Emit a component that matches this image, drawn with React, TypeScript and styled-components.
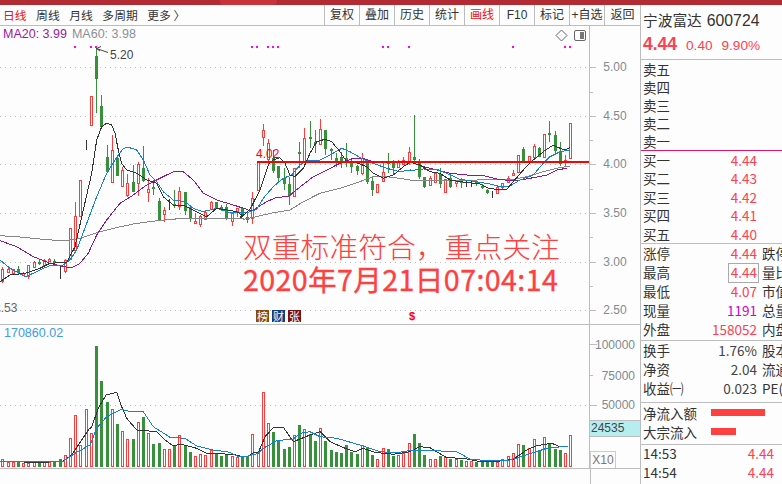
import styled, { createGlobalStyle } from "styled-components";

const SANS = `"Liberation Sans", "Noto Sans CJK SC", sans-serif`;
const CJK = `"Noto Sans CJK SC", "Liberation Sans", sans-serif`;

const UP = "#ff3c3c";
const DOWN = "#37913a";
const BG = "#fdfdfd";
const LINE = "#bdbdbd";

type Candle = [string, number, number, number, number];

// colour, wick top, body top, body bottom, wick bottom (page pixels)
const candles: Candle[] = [
  ["r", 267, 269, 281, 283], ["r", 268, 269, 272, 273], ["r", 269, 269, 273, 273], ["g", 266, 269, 273, 275],
  ["r", 272, 273, 275, 275], ["r", 265, 265, 276, 279], ["r", 261, 262, 267, 268], ["g", 260, 262, 263, 265],
  ["r", 259, 260, 265, 266], ["r", 258, 259, 261, 262], ["g", 259, 261, 262, 265], ["k", 265, 267, 267, 279],
  ["r", 259, 260, 271, 273], ["r", 228, 228, 259, 260], ["r", 202, 216, 250, 250], ["r", 180, 180, 216, 216],
  ["k", 140, 145, 145, 150], ["r", 96, 96, 125, 125], ["g", 47, 56, 79, 113], ["g", 95, 106, 127, 127],
  ["g", 145, 157, 172, 172], ["r", 135, 150, 182, 182], ["g", 155, 158, 176, 176], ["r", 167, 170, 186, 186],
  ["r", 174, 183, 195, 197], ["g", 165, 182, 192, 192], ["r", 162, 164, 183, 196], ["g", 146, 168, 181, 182],
  ["r", 178, 189, 192, 202], ["g", 180, 187, 189, 195], ["g", 198, 201, 220, 221], ["r", 207, 210, 214, 222],
  ["k", 199, 204, 204, 210], ["g", 190, 204, 206, 208], ["r", 187, 191, 206, 210], ["g", 192, 192, 211, 215],
  ["g", 207, 207, 219, 222], ["r", 213, 221, 223, 223], ["r", 215, 216, 224, 227], ["r", 210, 212, 219, 219],
  ["r", 201, 202, 209, 210], ["g", 202, 202, 208, 208], ["g", 205, 207, 210, 211], ["g", 204, 207, 219, 220],
  ["r", 212, 213, 221, 226], ["r", 208, 208, 211, 217], ["g", 207, 208, 215, 217], ["g", 213, 217, 220, 223],
  ["r", 192, 198, 218, 224], ["r", 161, 162, 190, 190], ["r", 124, 130, 137, 146], ["r", 139, 143, 159, 165],
  ["g", 150, 158, 171, 173], ["g", 166, 166, 178, 182], ["g", 168, 178, 184, 190], ["g", 177, 184, 196, 205],
  ["r", 168, 168, 196, 197], ["g", 142, 152, 153, 168], ["r", 128, 138, 162, 163], ["g", 121, 137, 138, 148],
  ["g", 130, 142, 144, 153], ["r", 119, 129, 144, 145], ["g", 130, 130, 149, 155], ["g", 148, 149, 151, 160],
  ["g", 153, 158, 162, 167], ["g", 152, 157, 162, 168], ["g", 143, 158, 163, 167], ["g", 158, 162, 167, 173],
  ["g", 165, 166, 171, 175], ["r", 153, 158, 173, 175], ["g", 162, 162, 182, 184], ["g", 178, 181, 190, 196],
  ["r", 184, 184, 192, 192], ["r", 162, 172, 181, 181], ["g", 153, 162, 163, 173], ["g", 160, 163, 168, 175],
  ["r", 160, 162, 167, 168], ["r", 157, 160, 164, 165], ["r", 147, 152, 162, 165], ["g", 115, 157, 160, 162],
  ["g", 159, 163, 177, 179], ["g", 177, 177, 187, 188], ["r", 176, 178, 185, 186], ["r", 172, 173, 182, 182],
  ["g", 168, 174, 184, 188], ["r", 179, 179, 192, 192], ["g", 173, 178, 187, 188], ["r", 180, 181, 183, 187],
  ["g", 178, 181, 183, 188], ["k", 181, 182, 182, 187], ["k", 181, 182, 182, 187], ["g", 182, 182, 183, 186],
  ["g", 184, 186, 188, 189], ["g", 189, 190, 193, 194], ["k", 191, 192, 192, 198], ["r", 187, 187, 193, 193],
  ["r", 183, 183, 187, 189], ["r", 176, 178, 182, 183], ["r", 170, 173, 175, 176], ["r", 155, 155, 172, 172],
  ["g", 147, 149, 161, 162], ["r", 156, 156, 162, 162], ["r", 144, 146, 157, 158], ["g", 147, 148, 157, 157],
  ["r", 134, 134, 157, 157], ["g", 121, 133, 135, 142], ["g", 131, 135, 151, 153], ["g", 142, 151, 164, 166],
  ["R", 155, 160, 163, 166], ["r", 123, 123, 158, 158],
];

// bar tops, as read from the 3x crop (y = 320 + v / 3)
const volumes: [string, number][] = [
  ["r", 418], ["r", 425], ["r", 425], ["g", 425], ["r", 430], ["r", 428], ["r", 427], ["g", 428], ["r", 422], ["r", 425],
  ["g", 425], ["g", 418], ["r", 406], ["r", 354], ["r", 286], ["r", 376], ["r", 268], ["r", 340], ["g", 78], ["g", 183],
  ["g", 246], ["r", 268], ["g", 312], ["r", 334], ["r", 358], ["g", 357], ["r", 307], ["g", 291], ["r", 340], ["g", 372],
  ["g", 369], ["r", 387], ["r", 387], ["g", 379], ["r", 346], ["g", 376], ["g", 396], ["r", 408], ["r", 402], ["r", 405],
  ["r", 390], ["g", 402], ["g", 408], ["g", 403], ["r", 408], ["r", 410], ["g", 408], ["g", 408], ["r", 343], ["r", 398],
  ["r", 216], ["r", 310], ["g", 336], ["g", 362], ["g", 387], ["g", 381], ["r", 346], ["g", 315], ["r", 328], ["g", 343],
  ["g", 363], ["r", 325], ["g", 363], ["g", 390], ["g", 396], ["g", 399], ["g", 376], ["g", 396], ["g", 402], ["r", 376],
  ["g", 382], ["g", 405], ["r", 418], ["r", 385], ["g", 387], ["g", 408], ["r", 405], ["r", 400], ["r", 370], ["g", 342],
  ["g", 369], ["g", 405], ["r", 418], ["r", 418], ["g", 408], ["r", 410], ["g", 417], ["r", 418], ["g", 420], ["r", 424],
  ["r", 422], ["g", 425], ["g", 425], ["g", 422], ["g", 425], ["r", 425], ["r", 418], ["r", 408], ["r", 400], ["r", 373],
  ["g", 376], ["r", 385], ["r", 358], ["g", 390], ["r", 352], ["g", 372], ["g", 387], ["g", 390], ["r", 400], ["r", 346],
];

const toPts = (ox: number, oy: number, raw: number[]) => {
  const out: string[] = [];
  for (let i = 0; i < raw.length; i += 2) {
    out.push(`${(ox + raw[i] / 3).toFixed(1)},${(oy + raw[i + 1] / 3).toFixed(1)}`);
  }
  return out.join(" ");
};

const ma5 = [
  toPts(0, 100, [0, 545, 30, 525, 75, 520, 120, 505, 150, 490, 200, 487, 225, 440, 250, 330, 275, 220, 290, 120, 305, 80, 320, 70, 335, 75, 345, 100, 355, 150, 365, 190, 380, 210, 410, 220, 440, 240, 470, 250, 490, 290, 520, 315, 550, 315, 580, 330, 620, 350, 650, 325, 680, 330, 710, 335, 725, 345]),
  toPts(240, 110, [0, 325, 30, 298, 60, 240, 85, 165, 100, 150, 120, 143, 135, 160, 150, 195, 165, 200, 190, 175, 210, 130, 230, 95, 255, 88, 275, 95, 300, 125, 320, 155, 350, 158, 380, 170, 400, 190, 430, 205, 460, 195, 490, 170, 510, 157]),
  toPts(410, 110, [0, 157, 30, 165, 60, 185, 90, 190, 120, 210, 150, 215, 180, 218, 210, 222, 235, 235, 260, 238, 290, 238, 310, 215, 340, 180, 370, 150, 400, 125, 430, 105, 450, 115, 465, 120, 480, 112]),
].join(" ");

const ma10 = [
  toPts(0, 100, [0, 480, 30, 505, 50, 515, 75, 530, 100, 520, 130, 505, 150, 497, 190, 495, 210, 480, 230, 450, 260, 370, 290, 290, 320, 220, 345, 180, 370, 145, 385, 142, 410, 150, 430, 180, 450, 225, 470, 245, 490, 275, 520, 300, 555, 305, 580, 325, 610, 335, 650, 325, 690, 338, 740, 338]),
  toPts(240, 110, [30, 305, 50, 298, 70, 265, 100, 230, 130, 205, 155, 195, 180, 165, 205, 150, 240, 150, 270, 135, 305, 115, 330, 125, 370, 148, 400, 160, 440, 175, 480, 185, 510, 180]),
  toPts(410, 110, [0, 182, 40, 177, 80, 178, 110, 190, 150, 208, 200, 215, 240, 222, 270, 230, 300, 228, 330, 210, 370, 195, 400, 160, 420, 140, 450, 125, 480, 120]),
].join(" ");

const ma20 = [
  toPts(0, 100, [0, 422, 50, 440, 100, 470, 150, 490, 190, 500, 215, 503, 240, 490, 265, 460, 290, 405, 320, 360, 360, 310, 400, 285, 440, 255, 480, 235, 520, 215, 550, 215, 580, 240, 610, 280, 650, 300, 700, 315, 740, 328]),
  toPts(240, 110, [30, 302, 40, 300, 80, 275, 110, 262, 145, 260, 175, 235, 220, 200, 260, 180, 300, 160, 340, 145, 370, 145, 400, 155, 460, 155]),
  toPts(410, 110, [0, 155, 40, 170, 80, 180, 120, 190, 170, 195, 220, 197, 260, 207, 300, 212, 330, 210, 370, 203, 410, 195, 440, 180, 470, 175]),
].join(" ");

const ma60 = [
  toPts(0, 100, [0, 407, 50, 410, 120, 417, 190, 423, 240, 415, 290, 398, 340, 385, 400, 372, 470, 362, 550, 355, 640, 355, 730, 355]),
  toPts(240, 110, [10, 328, 40, 322, 100, 308, 150, 300, 190, 275, 240, 250, 300, 235, 340, 222, 400, 200, 440, 200, 500, 208]),
  toPts(410, 110, [0, 210, 60, 212, 120, 212, 170, 212, 230, 208, 300, 210, 350, 200, 400, 185, 440, 175, 480, 168]),
].join(" ");

const volBlack = [
  toPts(0, 320, [0, 423, 120, 428, 190, 423, 215, 405, 235, 375, 265, 330, 275, 320, 295, 265, 318, 225, 350, 217, 365, 260, 380, 295, 410, 330, 470, 335, 495, 360, 520, 378, 540, 372, 590, 385, 620, 400, 700, 403, 720, 408, 745, 408, 760, 398, 775, 398, 795, 350, 820, 323, 850, 322, 880, 365, 930, 345]),
  toPts(320, 320, [0, 335, 30, 365, 80, 387, 105, 395, 130, 385, 165, 397, 220, 403, 270, 395, 300, 380, 330, 383, 380, 413, 430, 415, 470, 423, 540, 423, 580, 418, 620, 390, 650, 377, 695, 370, 720, 380, 745, 380]),
].join(" ");

const volBlue = [
  toPts(0, 320, [0, 425, 190, 424, 225, 400, 270, 375, 290, 325, 320, 290, 365, 268, 390, 275, 430, 275, 460, 320, 510, 352, 555, 355, 590, 378, 640, 390, 690, 397, 710, 408, 745, 408, 775, 400, 790, 385, 830, 362, 880, 357, 900, 340, 930, 335]),
  toPts(320, 320, [0, 350, 50, 355, 130, 378, 180, 395, 230, 398, 280, 390, 340, 392, 410, 395, 450, 417, 500, 422, 560, 423, 610, 408, 680, 385, 745, 378]),
].join(" ");

const signalDots = [75, 91, 96, 252, 257, 268, 273, 278, 383, 388, 409, 513, 565, 570];
const priceTicks = [
  { y: 67, label: "5.00" }, { y: 116, label: "4.50" }, { y: 164, label: "4.00" },
  { y: 213, label: "3.50" }, { y: 262, label: "3.00" }, { y: 310, label: "2.50" },
];
const minorTicks = [92, 140, 189, 237, 286];

const barX = (i: number) => Math.round(2.3 + 5.21 * i);

const GlobalStyle = createGlobalStyle`
  html, body {
    margin: 0;
    padding: 0;
    background: ${BG};
  }
  #root {
    width: 782px;
    height: 484px;
    overflow: hidden;
  }
`;

const Page = styled.div`
  width: 782px;
  height: 484px;
  display: flex;
  flex-direction: column;
  background: ${BG};
  color: #333;
  font-family: ${CJK};
`;

const TopStrip = styled.div`
  height: 5px;
  flex: none;
  background: #b22a32;
  display: flex;
`;

const StripTab = styled.div`
  width: 57px;
  margin-left: 220px;
  background: #c8323a;
  border-radius: 0 0 4px 4px;
`;

const Body = styled.div`
  flex: 1;
  display: flex;
  min-height: 0;
`;

const LeftColumn = styled.div`
  width: 640px;
  flex: none;
  display: flex;
  flex-direction: column;
  border-right: 1px solid ${LINE};
`;

const Toolbar = styled.div`
  height: 20px;
  flex: none;
  display: flex;
  justify-content: space-between;
  border-bottom: 1px solid ${LINE};
`;

const PeriodGroup = styled.div`
  display: flex;
  align-items: center;
  gap: 9.5px;
  padding-left: 3px;
`;

const PeriodItem = styled.span<{ $active?: boolean }>`
  font-size: 11.8px;
  line-height: 20px;
  color: ${(p) => (p.$active ? "#f01010" : "#333")};
`;

const ButtonGroup = styled.div`
  display: flex;
`;

const ToolButton = styled.span<{ $active?: boolean }>`
  width: 35px;
  box-sizing: border-box;
  border-left: 1px solid ${LINE};
  font-size: 12px;
  line-height: 20px;
  text-align: center;
  white-space: nowrap;
  color: ${(p) => (p.$active ? "#f01010" : "#333")};
  font-family: ${SANS};
  &:last-child {
    width: 36px;
  }
`;

const PricePanel = styled.div`
  position: relative;
  height: 298px;
  flex: none;
  border-bottom: 1px solid ${LINE};
`;

const ChartSvg = styled.svg`
  display: block;
`;

const Legend = styled.div`
  position: absolute;
  left: 3px;
  top: 1px;
  display: flex;
  gap: 5px;
  font: 12.5px/14px ${SANS};
`;

const LegendItem = styled.span<{ $color: string }>`
  color: ${(p) => p.$color};
`;

const Notice = styled.div`
  position: absolute;
  left: 243px;
  top: 203px;
  color: #ff4040;
  white-space: nowrap;
`;

const NoticeTitle = styled.div`
  font: 300 28.8px/34px ${CJK};
`;

const NoticeDate = styled.div`
  font: 400 28.6px/34px ${CJK};
  -webkit-text-stroke: 0.35px #ff4040;
  letter-spacing: 0.4px;
  margin-top: -1px;
`;

const BadgeRow = styled.div`
  position: absolute;
  left: 256px;
  top: 284px;
  display: flex;
  gap: 3px;
`;

const Badge = styled.span<{ $bg: string }>`
  width: 13px;
  height: 12px;
  background: ${(p) => p.$bg};
  color: #fff;
  font: 11px/12px ${CJK};
  text-align: center;
`;

const SignalMark = styled.span`
  position: absolute;
  left: 409px;
  top: 284px;
  color: #f00;
  font: bold 11px/13px ${SANS};
`;

const VolumePanel = styled.div`
  position: relative;
  height: 143px;
  flex: none;
  border-bottom: 1px solid ${LINE};
`;

const VolumeTitle = styled.div`
  position: absolute;
  left: 4px;
  top: 1px;
  color: #3c9bea;
  font: 12.5px/14px ${SANS};
`;

const ScaleTag = styled.div`
  position: absolute;
  left: 590px;
  bottom: 0;
  width: 26px;
  height: 17px;
  box-sizing: border-box;
  border: 1px solid #ccc;
  border-bottom: none;
  color: #777;
  font: 12px/17px ${SANS};
  text-align: center;
`;

const BottomStrip = styled.div`
  flex: 1;
  display: flex;
  justify-content: flex-end;
`;

const CornerBox = styled.div`
  width: 50px;
  border-left: 1px solid ${LINE};
  box-sizing: border-box;
`;

const AxisText = styled.text`
  font: 12px ${SANS};
  fill: #7f8a94;
`;

const SidePanel = styled.div`
  flex: 1;
  min-width: 0;
  overflow: hidden;
  display: flex;
  flex-direction: column;
`;

const Section = styled.div<{ $h: number; $line?: string }>`
  height: ${(p) => p.$h}px;
  flex: none;
  box-sizing: border-box;
  border-bottom: 1px solid ${(p) => p.$line ?? LINE};
  padding-left: 2px;
`;

const FlowSection = styled(Section)`
  padding-top: 1px;
`;

const TickList = styled.div`
  padding-left: 2px;
  margin-top: -1px;
`;

const StockName = styled.div`
  margin-top: 5px;
  font-size: 14.7px;
  line-height: 20px;
  white-space: nowrap;
`;

const StockCode = styled.span`
  font: 15.8px ${SANS};
  margin-left: 5px;
`;

const QuoteLine = styled.div`
  margin-top: 4px;
  display: flex;
  align-items: baseline;
  color: #ff4050;
  font: 13.6px/20px ${SANS};
  gap: 9px;
`;

const LastPrice = styled.span`
  font-size: 17.5px;
  font-weight: bold;
`;

const Row = styled.div<{ $h: number }>`
  height: ${(p) => p.$h}px;
  line-height: ${(p) => p.$h}px;
  display: flex;
  font-size: 13.5px;
  white-space: nowrap;
`;

const RowLabel = styled.span`
  width: 60px;
  flex: none;
`;

const RowValue = styled.span<{ $color?: string; $boxed?: boolean }>`
  width: 54px;
  flex: none;
  text-align: right;
  font: 14px/inherit ${SANS};
  line-height: inherit;
  color: ${(p) => p.$color ?? "#ff4050"};
  ${(p) =>
    p.$boxed
      ? `
    box-sizing: border-box;
    position: relative;
    &::after {
      content: "";
      position: absolute;
      left: 25px;
      right: -2px;
      top: 0;
      bottom: -1px;
      border: 1px solid #aaa;
    }
  `
      : ""}
`;

const RowExtra = styled.span`
  margin-left: 5px;
  flex: none;
`;

const FlowBar = styled.div<{ $w: number }>`
  width: ${(p) => p.$w}px;
  height: 7px;
  margin: 5px 0 0 14px;
  background: #ff4040;
`;

const TickTime = styled.span`
  width: 90px;
  flex: none;
  font: 13.4px/inherit ${SANS};
  line-height: inherit;
`;

const TickPrice = styled.span`
  width: 41px;
  text-align: right;
  flex: none;
  color: #ff4050;
  font: 14px/inherit ${SANS};
  line-height: inherit;
`;

const PERIODS = ["日线", "周线", "月线", "多周期", "更多 〉"];
const BUTTONS = ["复权", "叠加", "历史", "统计", "画线", "F10", "标记", "+自选", "返回"];
const ASKS = ["卖五", "卖四", "卖三", "卖二", "卖一"];
const BIDS: [string, string][] = [
  ["买一", "4.44"], ["买二", "4.43"], ["买三", "4.42"], ["买四", "4.41"], ["买五", "4.40"],
];

const Bars = ({ list }: { list: Candle[] }) => (
  <>
    {list.map(([c, hi, top, bottom, lo], i) => {
      const x = barX(i);
      const color = c === "g" ? DOWN : c === "k" ? "#333" : UP;
      return (
        <g key={i}>
          <rect x={x} y={hi} width={1} height={lo - hi} fill={color} />
          {c === "r" && (
            <rect x={x - 0.5} y={top + 0.5} width={2} height={Math.max(bottom - top, 1)} fill={BG} stroke={UP} />
          )}
          {c === "g" && <rect x={x - 1} y={top} width={3} height={Math.max(bottom - top, 2)} fill={DOWN} />}
          {c === "R" && <rect x={x - 1} y={top} width={3} height={bottom - top} fill={UP} />}
        </g>
      );
    })}
  </>
);

const PriceChart = () => (
  <ChartSvg width={640} height={298} viewBox="0 26 640 298">
    {priceTicks.map((t) => (
      <line key={t.y} x1={0} x2={589} y1={t.y + 0.5} y2={t.y + 0.5} stroke="#bbb" strokeDasharray="1 4" />
    ))}
    <line x1={589.5} x2={589.5} y1={26} y2={324} stroke={LINE} />
    {priceTicks.map((t) => (
      <g key={t.label}>
        <line x1={590} x2={596} y1={t.y + 0.5} y2={t.y + 0.5} stroke={LINE} />
        <AxisText x={612} y={t.y + 4} textAnchor="middle" dx={3}>
          {t.label}
        </AxisText>
      </g>
    ))}
    {minorTicks.map((y) => (
      <line key={y} x1={590} x2={593} y1={y + 0.5} y2={y + 0.5} stroke={LINE} />
    ))}
    {signalDots.map((x) => (
      <rect key={x} x={x - 1} y={46} width={2} height={2} fill="#f0f" />
    ))}
    <Bars list={candles} />
    <polyline points={ma60} fill="none" stroke="#868686" shapeRendering="crispEdges" />
    <polyline points={ma20} fill="none" stroke="#8a1a8e" shapeRendering="crispEdges" />
    <polyline points={ma10} fill="none" stroke="#1580d8" shapeRendering="crispEdges" />
    <polyline points={ma5} fill="none" stroke="#333" shapeRendering="crispEdges" />
    <path d="M96.5 48.5 L108 52.5 M96.5 48.5 L101 46.5 M96.5 48.5 L100 51" fill="none" stroke="#444" />
    <text x={110} y={59} fill="#444" fontFamily={SANS} fontSize={12}>
      5.20
    </text>
    <text x={-6} y={312} fill="#666" fontFamily={SANS} fontSize={12}>
      2.53
    </text>
    <text x={256} y={158} fill="#f00" fontFamily={SANS} fontSize={12}>
      4.02
    </text>
    <rect x={257} y={161} width={332} height={2} fill="#f00" />
    {/* draw-tool icons in the corner of the plot */}
    <path d="M561.5 30 L567 35.5 L561.5 41 L556 35.5 Z" fill="none" stroke="#666" />
    <rect x={574.5} y={30.5} width={11} height={10} rx={1.5} fill="none" stroke="#666" />
    <rect x={580} y={32} width={4} height={7} fill="#777" />
  </ChartSvg>
);

const VolumeChart = () => (
  <ChartSvg width={640} height={143} viewBox="0 325 640 143">
    <line x1={0} x2={589} y1={405.5} y2={405.5} stroke="#bbb" strokeDasharray="1 4" />
    <line x1={589.5} x2={589.5} y1={325} y2={468} stroke={LINE} />
    <line x1={590} x2={597} y1={344.5} y2={344.5} stroke={LINE} />
    <line x1={590} x2={593} y1={375.5} y2={375.5} stroke={LINE} />
    <line x1={590} x2={597} y1={405.5} y2={405.5} stroke={LINE} />
    <AxisText x={635} y={349} textAnchor="end">100000</AxisText>
    <AxisText x={635} y={380} textAnchor="end">75000</AxisText>
    <AxisText x={635} y={409} textAnchor="end">50000</AxisText>
    <rect x={590} y={420} width={50} height={16} fill="#b6eef0" />
    <line x1={590} x2={640} y1={420.5} y2={420.5} stroke={LINE} />
    <line x1={590} x2={640} y1={436.5} y2={436.5} stroke={LINE} />
    <text x={591} y={432} fill="#444" fontFamily={SANS} fontSize={12}>
      24535
    </text>
    {volumes.map(([c, v], i) => {
      const x = barX(i);
      const top = Math.round(320 + v / 3);
      return c === "g" ? (
        <rect key={i} x={x - 1} y={top} width={3} height={467 - top} fill={DOWN} />
      ) : (
        <rect key={i} x={x - 0.5} y={top + 0.5} width={2} height={466 - top} fill={BG} stroke={UP} />
      );
    })}
    <polyline points={volBlack} fill="none" stroke="#333" shapeRendering="crispEdges" />
    <polyline points={volBlue} fill="none" stroke="#1580d8" shapeRendering="crispEdges" />
  </ChartSvg>
);

const App = () => (
  <Page>
    <GlobalStyle />
    <TopStrip>
      <StripTab />
    </TopStrip>
    <Body>
      <LeftColumn>
        <Toolbar>
          <PeriodGroup>
            {PERIODS.map((p, i) => (
              <PeriodItem key={p} $active={i === 0}>
                {p}
              </PeriodItem>
            ))}
          </PeriodGroup>
          <ButtonGroup>
            {BUTTONS.map((b) => (
              <ToolButton key={b} $active={b === "画线"}>
                {b}
              </ToolButton>
            ))}
          </ButtonGroup>
        </Toolbar>
        <PricePanel>
          <PriceChart />
          <Legend>
            <LegendItem $color="#9a1a9e">MA20: 3.99</LegendItem>
            <LegendItem $color="#8a8f96">MA60: 3.98</LegendItem>
          </Legend>
          <Notice>
            <NoticeTitle>双重标准符合，重点关注</NoticeTitle>
            <NoticeDate>2020年7月21日07:04:14</NoticeDate>
          </Notice>
          <BadgeRow>
            <Badge $bg="#8a4a0c">榜</Badge>
            <Badge $bg="#0d3f7c">财</Badge>
            <Badge $bg="#7c0f16">张</Badge>
          </BadgeRow>
          <SignalMark>$</SignalMark>
        </PricePanel>
        <VolumePanel>
          <VolumeChart />
          <VolumeTitle>170860.02</VolumeTitle>
          <ScaleTag>X10</ScaleTag>
        </VolumePanel>
        <BottomStrip>
          <CornerBox />
        </BottomStrip>
      </LeftColumn>
      <SidePanel>
        <Section $h={55}>
          <StockName>
            宁波富达<StockCode>600724</StockCode>
          </StockName>
          <QuoteLine>
            <LastPrice>4.44</LastPrice>
            <span>0.40</span>
            <span>9.90%</span>
          </QuoteLine>
        </Section>
        <Section $h={91} $line="#e0146c">
          {ASKS.map((a) => (
            <Row key={a} $h={18}>
              <RowLabel>{a}</RowLabel>
            </Row>
          ))}
        </Section>
        <Section $h={93}>
          {BIDS.map(([label, price]) => (
            <Row key={label} $h={18.4}>
              <RowLabel>{label}</RowLabel>
              <RowValue>{price}</RowValue>
            </Row>
          ))}
        </Section>
        <Section $h={97}>
          <Row $h={19}>
            <RowLabel>涨停</RowLabel>
            <RowValue>4.44</RowValue>
            <RowExtra>跌停</RowExtra>
          </Row>
          <Row $h={19}>
            <RowLabel>最高</RowLabel>
            <RowValue $boxed>4.44</RowValue>
            <RowExtra>量比</RowExtra>
          </Row>
          <Row $h={19}>
            <RowLabel>最低</RowLabel>
            <RowValue>4.07</RowValue>
            <RowExtra>市值</RowExtra>
          </Row>
          <Row $h={19}>
            <RowLabel>现量</RowLabel>
            <RowValue $color="#d000d0">1191</RowValue>
            <RowExtra>总量</RowExtra>
          </Row>
          <Row $h={19}>
            <RowLabel>外盘</RowLabel>
            <RowValue>158052</RowValue>
            <RowExtra>内盘</RowExtra>
          </Row>
        </Section>
        <Section $h={62}>
          <Row $h={19}>
            <RowLabel>换手</RowLabel>
            <RowValue $color="#444">1.76%</RowValue>
            <RowExtra>股本</RowExtra>
          </Row>
          <Row $h={19}>
            <RowLabel>净资</RowLabel>
            <RowValue $color="#444">2.04</RowValue>
            <RowExtra>流通</RowExtra>
          </Row>
          <Row $h={19}>
            <RowLabel>收益㈠</RowLabel>
            <RowValue $color="#444">0.023</RowValue>
            <RowExtra>PE(</RowExtra>
          </Row>
        </Section>
        <FlowSection $h={42}>
          <Row $h={19}>
            <span>净流入额</span>
            <FlowBar $w={54} />
          </Row>
          <Row $h={19}>
            <span>大宗流入</span>
            <FlowBar $w={25} />
          </Row>
        </FlowSection>
        <TickList>
          <Row $h={19}>
            <TickTime>14:53</TickTime>
            <TickPrice>4.44</TickPrice>
          </Row>
          <Row $h={19}>
            <TickTime>14:54</TickTime>
            <TickPrice>4.44</TickPrice>
          </Row>
        </TickList>
      </SidePanel>
    </Body>
  </Page>
);

export default App;
